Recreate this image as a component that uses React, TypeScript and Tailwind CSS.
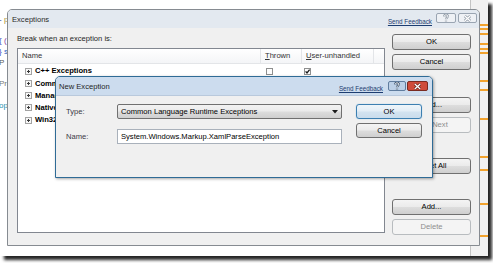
import React from "react";

type Seg = { t: string; c: string };

const codeLines: Seg[][] = [
  [{ t: "- ", c: "#2b3b8a" }, { t: "p", c: "#a8903c" }],
  [],
  [{ t: "{ ", c: "#3a4fc0" }, { t: "(", c: "#8a3a9a" }],
  [{ t: "} ", c: "#3a4fc0" }, { t: "s", c: "#2b5fbf" }],
  [{ t: "P", c: "#555555" }],
  [],
  [{ t: "Pro", c: "#777777" }],
  [],
  [{ t: "op", c: "#2b91af" }],
];

const marks = [24, 28, 33, 43, 48, 52, 80, 89, 118, 156, 169, 203, 235];

const rows = [
  "C++ Exceptions",
  "Common Language Runtime Exceptions",
  "Managed Debugging Assistants",
  "Native Run-Time Checks",
  "Win32 Exceptions",
];

function Button({
  label,
  disabled,
  className,
}: {
  label: string;
  disabled?: boolean;
  className: string;
}) {
  return (
    <div
      className={`${className} flex items-center justify-center rounded-[3px] border ${
        disabled
          ? "border-[#b8bcbf] bg-[#f4f4f4] text-[#8d8d8d]"
          : "border-[#707070] bg-[linear-gradient(to_bottom,#f4f4f4,#ebebeb_48%,#dddddd_52%,#cfcfcf)] text-black"
      }`}
    >
      {label}
    </div>
  );
}

function Check({ checked }: { checked?: boolean }) {
  return (
    <svg width="7" height="7" viewBox="0 0 7 7">
      <rect x="0.5" y="0.5" width="6" height="6" fill="#fdfdfd" stroke="#8e8f8f" />
      {checked && (
        <path d="M1.6 3.4 L3 5 L5.6 1.6" stroke="#1a1a1a" strokeWidth="1.3" fill="none" />
      )}
    </svg>
  );
}

function PlusBox() {
  return (
    <svg width="7" height="7" viewBox="0 0 7 7">
      <rect x="0.5" y="0.5" width="6" height="6" fill="#f7f7f7" stroke="#a3a3a3" />
      <path d="M2 3.5 H5 M3.5 2 V5" stroke="#3a3a3a" strokeWidth="1" />
    </svg>
  );
}

function HelpGlyph({ active }: { active?: boolean }) {
  return (
    <svg width="6" height="8" viewBox="0 0 6 8" className="block">
      <path
        d="M1.2 2.4 C1.2 0.4 4.8 0.4 4.8 2.3 C4.8 3.6 3 3.6 3 5.2 M3 6.4 V7.4"
        fill="none"
        stroke={active ? "#3a506a" : "#8a95a2"}
        strokeWidth="2.2"
      />
      <path
        d="M1.2 2.4 C1.2 0.4 4.8 0.4 4.8 2.3 C4.8 3.6 3 3.6 3 5.2 M3 6.4 V7.4"
        fill="none"
        stroke="#ffffff"
        strokeWidth="1"
      />
    </svg>
  );
}

function CloseGlyph({ active }: { active?: boolean }) {
  return (
    <svg width="9" height="7" viewBox="0 0 9 7" className="block">
      <path d="M1.8 1 L7.2 6 M7.2 1 L1.8 6" stroke={active ? "#5a1f18" : "#8a95a2"} strokeWidth="2.6" />
      <path d="M1.8 1 L7.2 6 M7.2 1 L1.8 6" stroke="#ffffff" strokeWidth="1.3" />
    </svg>
  );
}

function Feedback() {
  return (
    <span className="text-[6.3px] underline text-[#1d3d70] leading-none whitespace-nowrap">Send Feedback</span>
  );
}

export default function App() {
  return (
    <div className="w-[493px] h-[263px] bg-white font-['Liberation_Sans',Arial,sans-serif] text-[7.6px] text-black">
      <div className="relative w-[488px] h-[256px] bg-white overflow-hidden shadow-[4px_4px_3px_rgba(0,0,0,0.85)]">
        {/* editor behind the dialogs */}
        <div className="flex h-full">
          <div className="flex-1 pt-[15px] flex flex-col -ml-[1px] text-[8px]">
            {codeLines.map((line, i) => (
              <div key={i} className="h-[10.7px] leading-[10.7px] whitespace-pre">
                {line.map((s, j) => (
                  <span key={j} style={{ color: s.c }}>
                    {s.t}
                  </span>
                ))}
              </div>
            ))}
          </div>
          <div className="relative w-[18px] border-l border-[#c4c4c4] bg-[#f1f1f1]">
            {marks.map((m) => (
              <div
                key={m}
                className="absolute left-[9px] w-[8px] h-[1.5px] bg-[#f2a32e]"
                style={{ top: m }}
              />
            ))}
          </div>
        </div>

        {/* Exceptions dialog */}
        <div className="absolute left-[7px] top-[9px] w-[473px] h-[237px] flex flex-col border border-[#868b91] rounded-t-[5px] bg-[#f0f0f0]">
          <div className="h-[18px] flex items-start pl-[4px] rounded-t-[4px] bg-[#e3e9f0]">
            <span className="mt-[4px] text-[#2a2a2a]">Exceptions</span>
            <span className="ml-auto mt-[6px] mr-[4px]">
              <Feedback />
            </span>
            <span className="mt-[3px] w-[20px] h-[10px] shrink-0 flex items-center justify-center rounded-[2px] border border-[#9aa5b2] bg-[#eef1f5]">
              <HelpGlyph />
            </span>
            <span className="mt-[3px] ml-[2px] w-[19px] h-[10px] shrink-0 flex items-center justify-center rounded-[2px] border border-[#9aa5b2] bg-[#eef1f5]">
              <CloseGlyph />
            </span>
            <span className="w-[2px] shrink-0" />
          </div>
          <div className="flex-1 flex pl-[9px]">
            <div className="pt-[5px] flex flex-col">
              <div className="h-[12px] leading-[12px] text-[#1e1e1e]">Break when an exception is:</div>
              <div className="mt-[3px] w-[368px] h-[185px] border border-[#828790] bg-white flex flex-col">
                <div className="h-[15px] flex border-b border-[#e3e5e8] bg-linear-to-b from-white to-[#f4f5f7] text-[#333]">
                  <div className="w-[243px] pl-[4px] flex items-center border-r border-[#e3e5e8]">Name</div>
                  <div className="w-[41px] pl-[4px] flex items-center border-r border-[#e3e5e8]">
                    <span>
                      <span className="underline">T</span>hrown
                    </span>
                  </div>
                  <div className="w-[72px] pl-[4px] flex items-center border-r border-[#e3e5e8]">
                    <span>
                      <span className="underline">U</span>ser-unhandled
                    </span>
                  </div>
                  <div className="flex-1" />
                </div>
                <div className="mt-[1px] flex flex-col">
                  {rows.map((r) => (
                    <div key={r} className="h-[12.25px] flex items-center">
                      <div className="w-[243px] pl-[7px] flex items-center">
                        <PlusBox />
                        <span className="ml-[3px] font-bold">{r}</span>
                      </div>
                      <div className="w-[41px] pl-[5px] flex items-center">
                        <Check />
                      </div>
                      <div className="w-[72px] pl-[2px] flex items-center">
                        <Check checked />
                      </div>
                    </div>
                  ))}
                </div>
              </div>
            </div>
            <div className="ml-[7px] pt-[6px] flex flex-col">
              <Button label="OK" className="w-[79px] h-[16px]" />
              <Button label="Cancel" className="w-[79px] h-[16px] mt-[4px]" />
              <Button label="Find..." className="w-[79px] h-[16px] mt-[27px]" />
              <Button label="Find Next" disabled className="w-[79px] h-[16px] mt-[4px]" />
              <Button label="Reset All" className="w-[79px] h-[16px] mt-[25px]" />
              <Button label="Add..." className="w-[79px] h-[16px] mt-[25px]" />
              <Button label="Delete" disabled className="w-[79px] h-[16px] mt-[4px]" />
            </div>
          </div>
        </div>

        {/* New Exception dialog */}
        <div className="absolute left-[55px] top-[76px] w-[378px] h-[102px] flex flex-col border border-[#2f6b96] rounded-t-[5px] bg-[#f0f0f0] shadow-[1px_1px_3px_rgba(0,0,0,0.35)]">
          <div className="h-[18px] flex items-start pl-[3px] rounded-t-[4px] bg-[#ccdcee]">
            <span className="mt-[4px] text-[#1e1e1e]">New Exception</span>
            <span className="ml-auto mt-[6px] mr-[5px]">
              <Feedback />
            </span>
            <span className="mt-[4px] w-[18px] h-[10px] shrink-0 flex items-center justify-center rounded-[2px] border border-[#5f7c9e] bg-[#bcd0e7]">
              <HelpGlyph active />
            </span>
            <span className="mt-[4px] ml-[1px] w-[21px] h-[10px] shrink-0 flex items-center justify-center rounded-[2px] border border-[#7a2b22] bg-[#cf4c3b]">
              <CloseGlyph active />
            </span>
            <span className="w-[4px] shrink-0" />
          </div>
          <div className="flex-1 flex pl-[10px] pt-[8px] border-t border-[#b9c9dc]">
            <div className="grid grid-cols-[51px_225px] gap-y-[10px] auto-rows-[15px]">
              <div className="flex items-center text-[#3a3a46]">Type:</div>
              <div className="flex items-center rounded-[2px] border border-[#707070] bg-[linear-gradient(to_bottom,#f2f2f2,#ebebeb_48%,#dddddd_52%,#cfcfcf)] pl-[3px] pr-[3px]">
                <span>Common Language Runtime Exceptions</span>
                <svg className="ml-auto" width="6" height="4" viewBox="0 0 6 4">
                  <path d="M0 0 H6 L3 3.5 Z" fill="#1a1a1a" />
                </svg>
              </div>
              <div className="flex items-center text-[#3a3a46]">Name:</div>
              <div className="flex items-center border border-[#a9b1bb] bg-white pl-[3px]">
                System.Windows.Markup.XamlParseException
              </div>
            </div>
            <div className="ml-[14px] flex flex-col">
              <div className="w-[66px] h-[15px] flex items-center justify-center rounded-[3px] border border-[#3c7fb1] bg-[linear-gradient(to_bottom,#eef5fa,#e2edf6_48%,#d3e3f0_52%,#c9dcec)] shadow-[0_0_1px_#6fb2e0]">
                OK
              </div>
              <Button label="Cancel" className="w-[66px] h-[15px] mt-[4px]" />
            </div>
          </div>
        </div>
      </div>
    </div>
  );
}
